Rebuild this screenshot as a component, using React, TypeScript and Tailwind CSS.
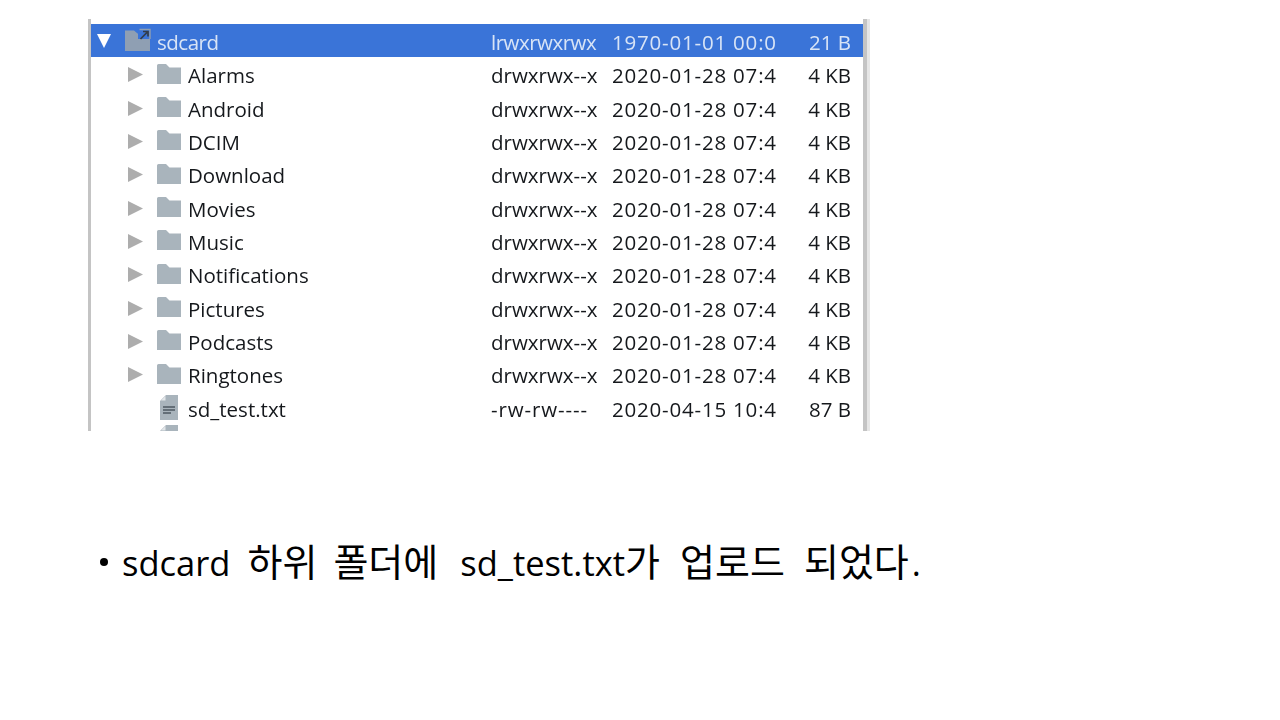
import React from "react";

const names = ["Alarms", "Android", "DCIM", "Download", "Movies", "Music", "Notifications", "Pictures", "Podcasts", "Ringtones"];

function Folder() {
  return (
    <svg width="24" height="20" viewBox="0 0 24 20" className="shrink-0">
      <path d="M0 1.5Q0 0 1.5 0H9l3.5 3.5H24V20H0z" fill="#a9b4bc" />
    </svg>
  );
}

function LinkFolder() {
  return (
    <svg width="27" height="23" viewBox="0 0 27 23" className="shrink-0">
      <path d="M0 2.5h9l3.5 3H25V23H0z" fill="#8f9fb3" />
      <rect x="13" y="0" width="14" height="11" fill="#3a74d8" />
      <path d="M14.5 1.5h10.5v9.5" stroke="#8f9fb3" strokeWidth="1.4" fill="none" />
      <path d="M18 3.5h5v5M22.8 3.7L15.5 11" stroke="#333d4a" strokeWidth="1.7" fill="none" />
    </svg>
  );
}

function Doc() {
  return (
    <svg width="18" height="25" viewBox="0 0 18 25" className="shrink-0">
      <path d="M6 0h12v25H0V6z" fill="#a9b4bc" />
      <path d="M1 5.5L5.5 1v4.5z" fill="#e3e7ea" />
      <path d="M3 12h12M3 15h12M3 18h8" stroke="#4d5862" strokeWidth="1.5" />
    </svg>
  );
}

function Cols({ perm, date, size, permClass }: { perm: string; date: string; size: string; permClass?: string }) {
  return (
    <>
      <div className={`w-[121px] shrink-0 whitespace-nowrap pt-[4px] ${permClass ?? ""}`}>{perm}</div>
      <div className="w-[165px] shrink-0 overflow-hidden whitespace-nowrap pt-[4px] tracking-[0.8px]">{date}</div>
      <div className="w-[74px] shrink-0 text-right whitespace-nowrap pt-[4px]">{size}</div>
    </>
  );
}

export default function App() {
  return (
    <div className="w-[1280px] h-[720px] bg-white overflow-hidden font-['Open_Sans','Noto_Sans_CJK_KR',sans-serif]">
      <div className="ml-[88px] pt-[19px] w-[782px]">
        <div className="border-r-[3px] border-[#e6e6e6]">
          <div className="h-[412px] border-l-[3px] border-r-[4px] border-[#c4c4c4] overflow-hidden bg-white pt-[5px] blur-[0.4px]">
            <div className="flex items-center h-[33px] bg-[#3a74d8] text-[20.5px] text-[#d8e4f6]">
              <div className="w-[6px] shrink-0" />
              <svg width="14" height="14" viewBox="0 0 14 14" className="shrink-0">
                <path d="M0 0h14L7 14z" fill="#ffffff" />
              </svg>
              <div className="w-[14px] shrink-0" />
              <div className="w-[32px] shrink-0 -translate-y-[1px]">
                <LinkFolder />
              </div>
              <div className="w-[334px] shrink-0 pt-[4px] tracking-[-0.5px]">sdcard</div>
              <Cols perm="lrwxrwxrwx" date="1970-01-01 00:0" size="21 B" permClass="tracking-[-0.5px]" />
            </div>
            {names.map((name) => (
              <div key={name} className="flex items-center h-[33.35px] text-[20.5px] text-[#15181c]">
                <div className="w-[37px] shrink-0" />
                <svg width="15" height="15" viewBox="0 0 15 15" className="shrink-0 translate-y-[1px]">
                  <path d="M0 0l15 7.5L0 15z" fill="#adadad" />
                </svg>
                <div className="w-[14px] shrink-0" />
                <div className="w-[31px] shrink-0">
                  <Folder />
                </div>
                <div className="w-[303px] shrink-0 truncate pt-[4px]">{name}</div>
                <Cols perm="drwxrwx--x" date="2020-01-28 07:4" size="4 KB" />
              </div>
            ))}
            <div className="flex items-center h-[33.35px] text-[20.5px] text-[#15181c]">
              <div className="w-[69px] shrink-0" />
              <div className="w-[28px] shrink-0">
                <Doc />
              </div>
              <div className="w-[303px] shrink-0 pt-[4px]">sd_test.txt</div>
              <Cols perm="-rw-rw----" date="2020-04-15 10:4" size="87 B" permClass="tracking-[0.9px]" />
            </div>
            <div className="ml-[69px] pt-[1px]">
              <Doc />
            </div>
          </div>
        </div>
      </div>
      <div className="ml-[100px] mt-[103px] flex items-center text-[34.5px] leading-[54px] text-black whitespace-nowrap">
        <div className="w-[8px] h-[8px] rounded-full bg-black shrink-0 mr-[14px]" />
        <div className="flex items-baseline">
          <span className="mr-[17px]">sdcard</span>
          <span className="text-[38px] mr-[16px]">하위</span>
          <span className="text-[38px] mr-[22px]">폴더에</span>
          <span>sd_test.txt</span>
          <span className="text-[38px] mr-[20px]">가</span>
          <span className="text-[38px] mr-[19px]">업로드</span>
          <span className="text-[38px]">되었다</span>
          <span className="ml-[3px]">.</span>
        </div>
      </div>
    </div>
  );
}
